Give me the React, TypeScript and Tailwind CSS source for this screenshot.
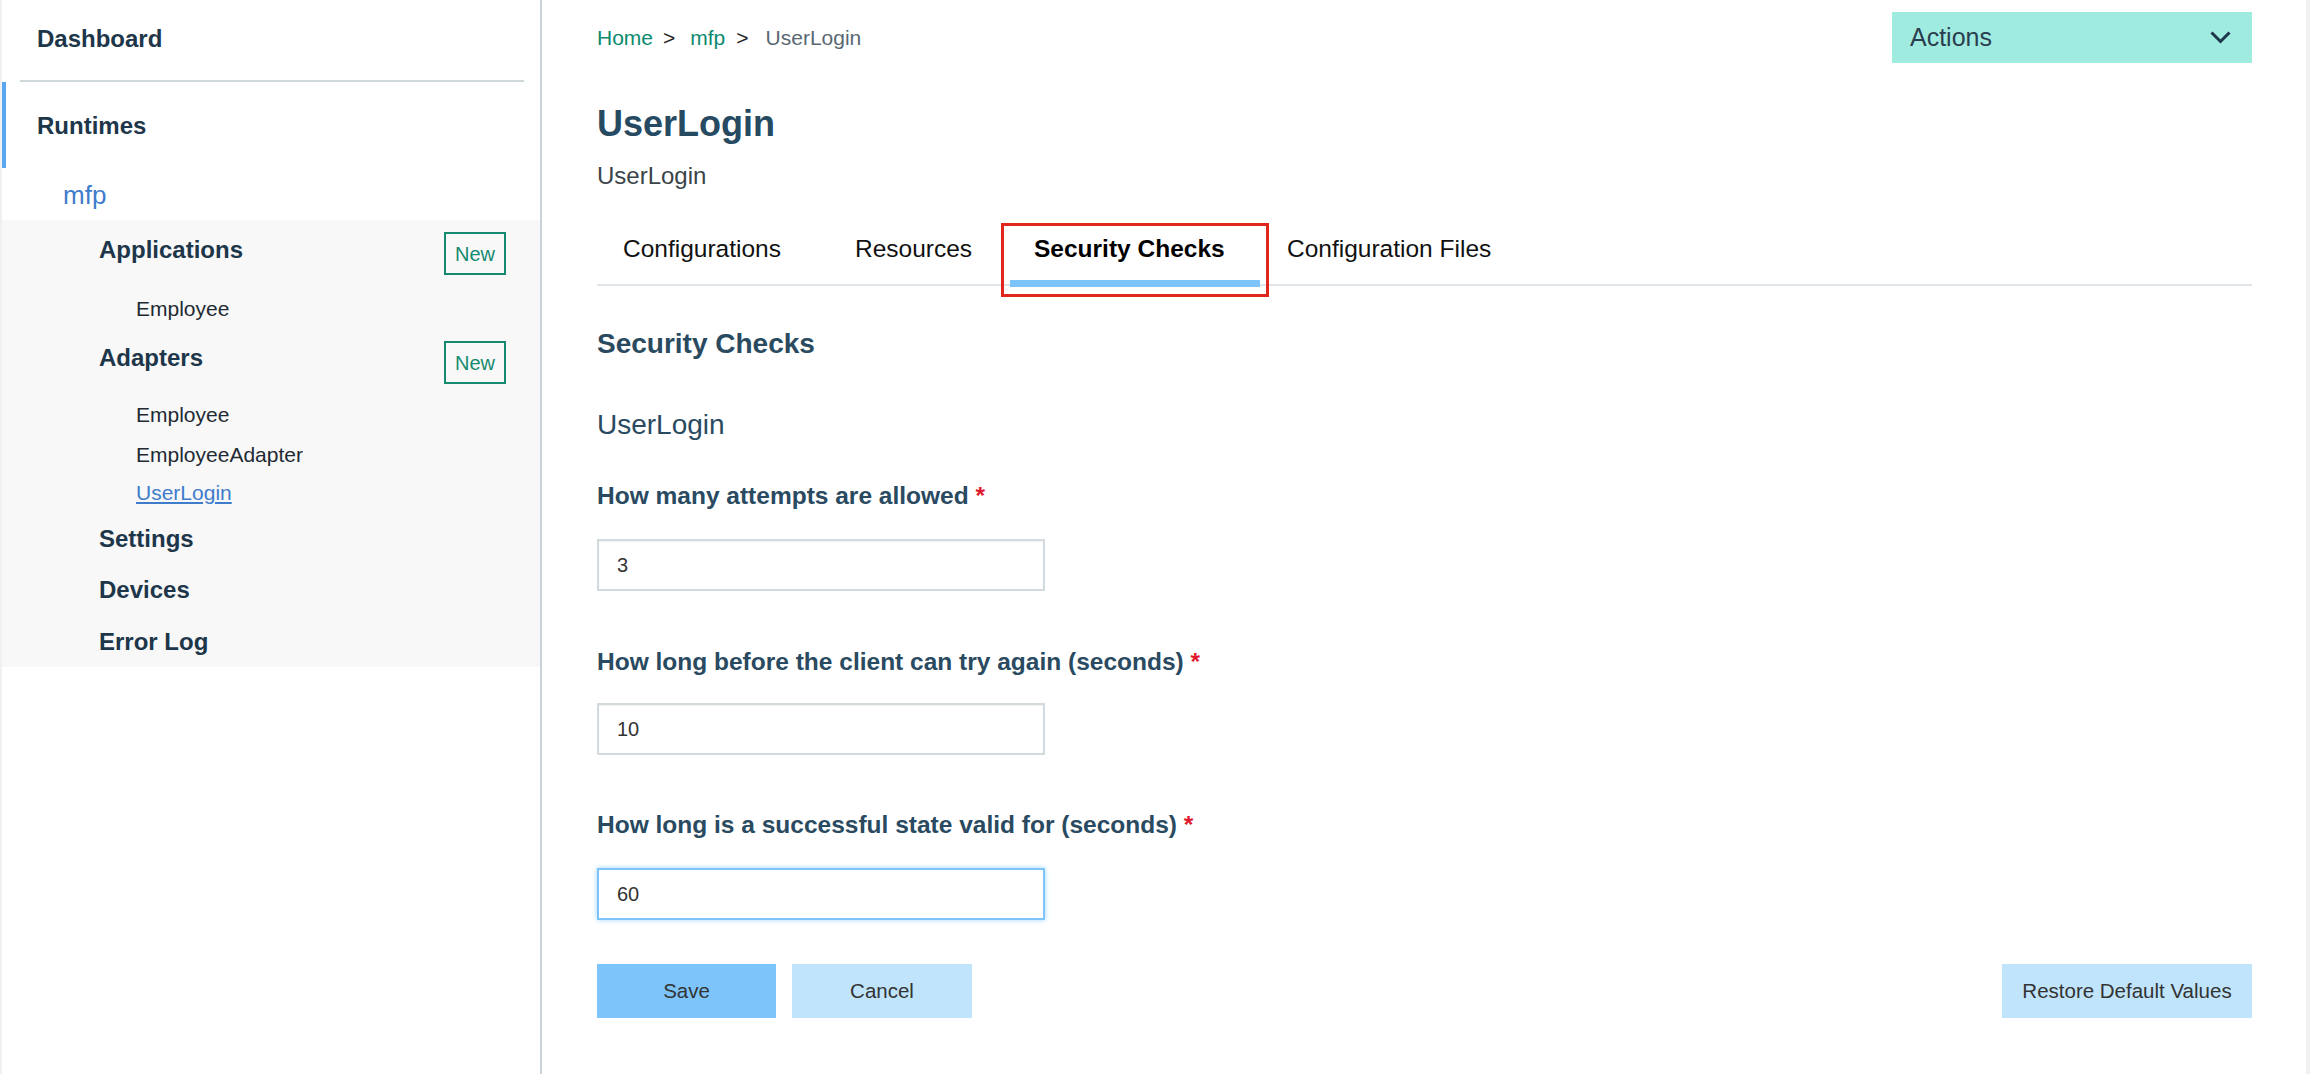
import React from "react";

const navy = "text-[#1d3649]";

function NewBtn() {
  return (
    <div className="w-[62px] h-[43px] border-2 border-[#168a6f] flex items-center justify-center text-[20px] text-[#168a6f]">
      New
    </div>
  );
}

function Sidebar() {
  return (
    <div className="w-[542px] shrink-0 border-l-2 border-l-[#f0f0f0] border-r-2 border-r-[#c9d3d7] bg-white">
      <div className={`pl-[35px] pt-[23px] h-[80px] text-[24px] leading-[32px] font-bold ${navy}`}>Dashboard</div>
      <div className="ml-[18px] mr-[16px] h-[2px] bg-[#cfd8db]" />
      <div className="border-l-4 border-l-[#5aa7f0] h-[86px] pt-[28px] pl-[31px]">
        <div className={`text-[24px] leading-[32px] font-bold ${navy}`}>Runtimes</div>
      </div>
      <div className="mt-[10px] pl-[61px] text-[26px] leading-[34px] text-[#3f7ccc]">mfp</div>
      <div className="mt-[8px] bg-[#f8f8f8] pt-[12px] pb-[9px] pl-[97px] pr-[34px]">
        <div className="flex justify-between items-start">
          <div className={`mt-[2px] text-[24px] leading-[32px] font-bold ${navy}`}>Applications</div>
          <NewBtn />
        </div>
        <div className="mt-[20px] pl-[37px] text-[21px] leading-[28px] text-[#1f2a33]">Employee</div>
        <div className="mt-[18px] flex justify-between items-start">
          <div className={`mt-[1px] text-[24px] leading-[32px] font-bold ${navy}`}>Adapters</div>
          <NewBtn />
        </div>
        <div className="mt-[17px] pl-[37px] text-[21px] leading-[28px] text-[#1f2a33]">Employee</div>
        <div className="mt-[12px] pl-[37px] text-[21px] leading-[28px] text-[#1f2a33]">EmployeeAdapter</div>
        <div className="mt-[10px] pl-[37px] text-[21px] leading-[28px] text-[#3f7ccc] underline">UserLogin</div>
        <div className={`mt-[16px] text-[24px] leading-[32px] font-bold ${navy}`}>Settings</div>
        <div className={`mt-[19px] text-[24px] leading-[32px] font-bold ${navy}`}>Devices</div>
        <div className={`mt-[20px] text-[24px] leading-[32px] font-bold ${navy}`}>Error Log</div>
      </div>
    </div>
  );
}

function Field({ label, value, mtLabel, mtInput, focus }: { label: string; value: string; mtLabel: string; mtInput: string; focus?: boolean }) {
  return (
    <div>
      <div className={`${mtLabel} text-[24.5px] leading-[32px] font-bold text-[#294a60]`}>
        {label} <span className="text-[#e0182d]">*</span>
      </div>
      <div
        className={`${mtInput} w-[448px] h-[52px] border-2 flex items-center pl-[18px] text-[20px] text-[#333] bg-white ${
          focus ? "border-[#7cc4fa] shadow-[0_0_5px_#9fd4fb]" : "border-[#d3dbde] shadow-[inset_0_1px_2px_rgba(0,0,0,0.06)]"
        }`}
      >
        {value}
      </div>
    </div>
  );
}

function Main() {
  return (
    <div className="flex-1 pl-[55px] pr-[54px] bg-white">
      <div className="mt-[12px] h-[51px] flex justify-between items-center">
        <div className="flex items-center text-[21px] leading-[28px]">
          <span className="text-[#0a8a6e]">Home</span>
          <span className="ml-[10px] text-[#222]">&gt;</span>
          <span className="ml-[15px] text-[#0a8a6e]">mfp</span>
          <span className="ml-[11px] text-[#222]">&gt;</span>
          <span className="ml-[17px] text-[#5a6872]">UserLogin</span>
        </div>
        <div className="w-[360px] h-[51px] bg-[#a0ebe0] flex items-center justify-between pl-[18px] pr-[21px]">
          <span className="text-[25px] text-[#2a3e4f]">Actions</span>
          <svg width="21" height="13" viewBox="0 0 21 13" fill="none">
            <path d="M1.5 1.5 L10.5 10.5 L19.5 1.5" stroke="#1d3649" strokeWidth="3" />
          </svg>
        </div>
      </div>
      <div className="mt-[39px] text-[36px] leading-[44px] font-bold text-[#264a62]">UserLogin</div>
      <div className="mt-[14px] text-[24px] leading-[32px] text-[#3a4448]">UserLogin</div>
      <div className="mt-[31px] h-[63px] border-b-2 border-b-[#dfe5e8] flex text-[24.5px] leading-[32px] text-[#111]">
        <div className="w-[233px] pl-[26px] pt-[10px]">Configurations</div>
        <div className="w-[180px] pl-[25px] pt-[10px]">Resources</div>
        <div className="relative w-[250px] pl-[24px] pt-[10px] font-bold text-black">
          Security Checks
          <div className="absolute left-0 top-[57px] w-[250px] h-[7px] bg-[#7cc4fa]" />
          <div className="absolute left-[-9px] top-0 w-[268px] h-[74px] border-[3px] border-[#e0261d]" />
        </div>
        <div className="pl-[27px] pt-[10px]">Configuration Files</div>
      </div>
      <div className="mt-[40px] text-[28px] leading-[36px] font-bold text-[#2a4a5f]">Security Checks</div>
      <div className="mt-[45px] text-[28px] leading-[36px] text-[#2a4a5f]">UserLogin</div>
      <Field label="How many attempts are allowed" value="3" mtLabel="mt-[37px]" mtInput="mt-[27px]" />
      <Field label="How long before the client can try again (seconds)" value="10" mtLabel="mt-[55px]" mtInput="mt-[25px]" />
      <Field label="How long is a successful state valid for (seconds)" value="60" mtLabel="mt-[54px]" mtInput="mt-[27px]" focus />
      <div className="mt-[44px] flex justify-between">
        <div className="flex gap-[16px]">
          <div className="w-[179px] h-[54px] bg-[#7cc4fa] flex items-center justify-center text-[20.5px] text-[#333]">Save</div>
          <div className="w-[180px] h-[54px] bg-[#c0e4fb] flex items-center justify-center text-[20.5px] text-[#333]">Cancel</div>
        </div>
        <div className="w-[250px] h-[54px] bg-[#c0e4fb] flex items-center justify-center text-[20.5px] text-[#333]">Restore Default Values</div>
      </div>
    </div>
  );
}

export default function App() {
  return (
    <div className="flex w-full h-[1074px] overflow-hidden bg-white" style={{ fontFamily: '"Liberation Sans", Arial, sans-serif' }}>
      <Sidebar />
      <Main />
      <div className="w-[4px] shrink-0 bg-[#f1f1f1]" />
    </div>
  );
}
